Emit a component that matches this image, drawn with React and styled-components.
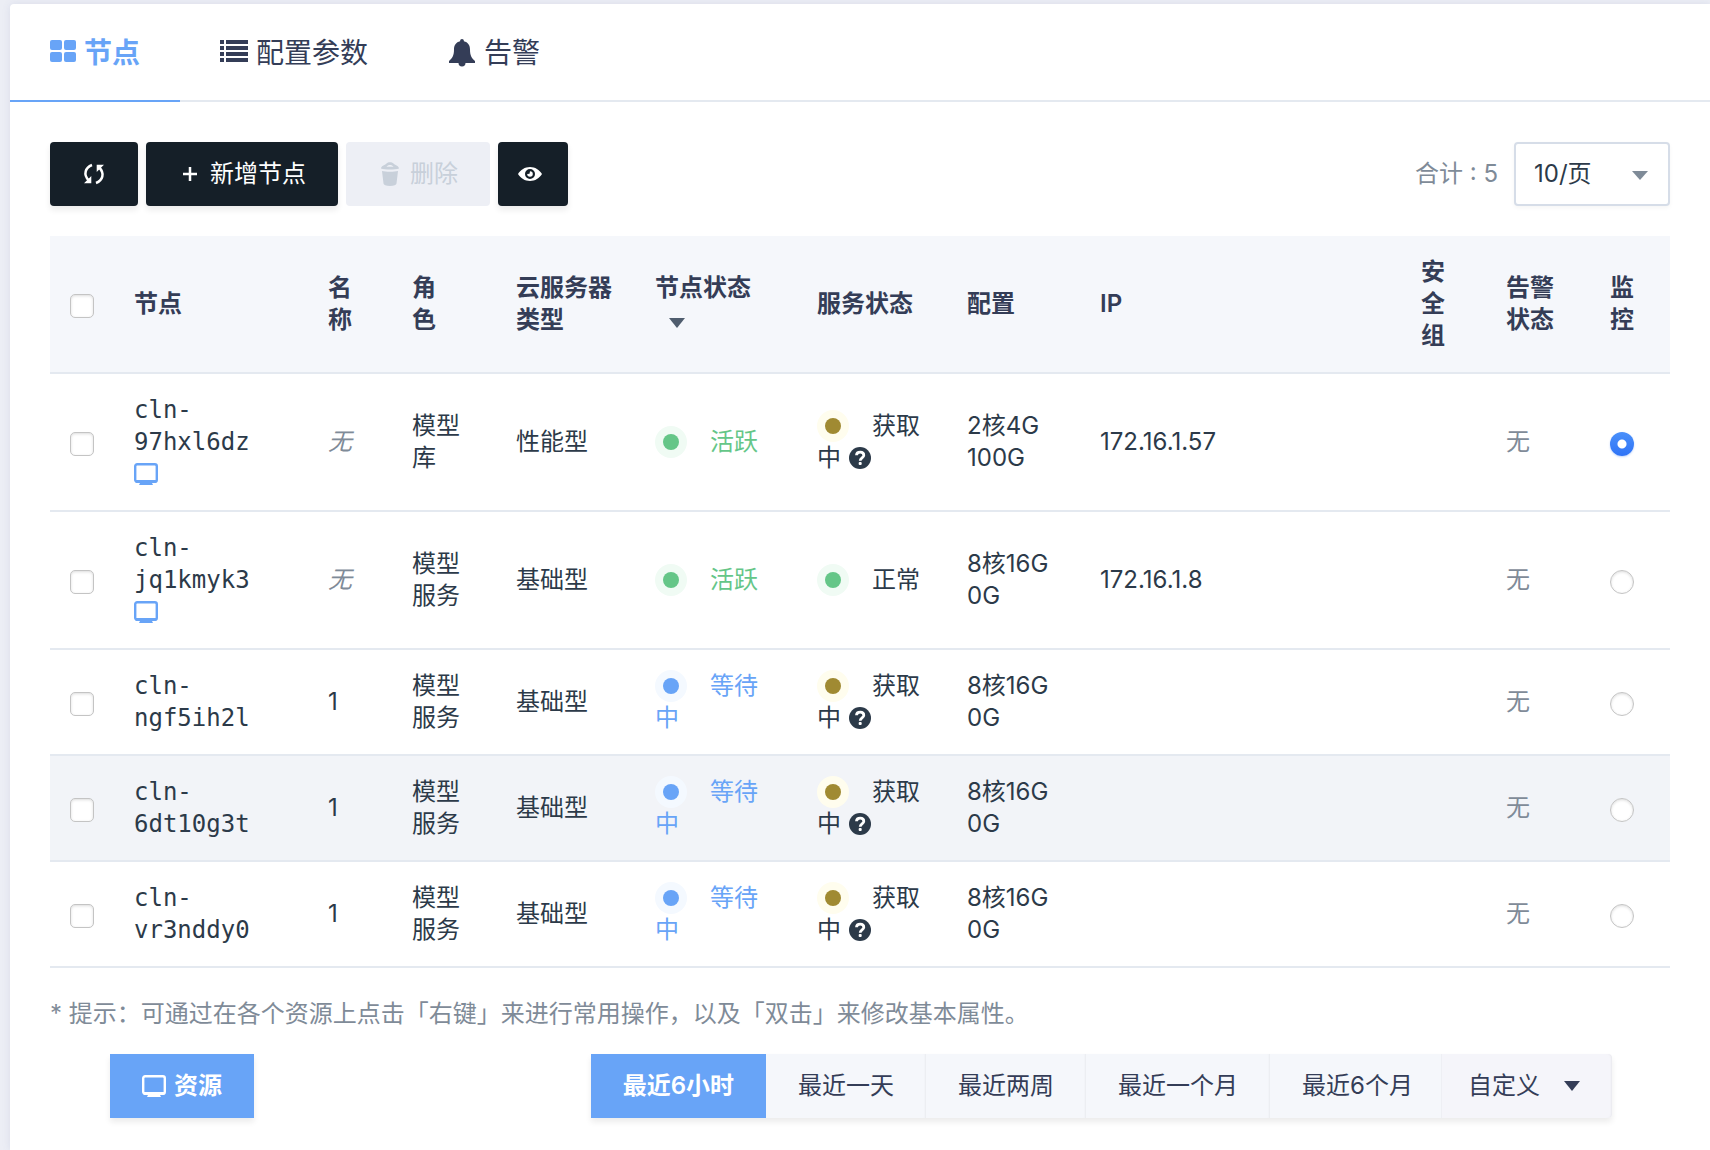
import React, { useState } from 'react'
import styled, { createGlobalStyle } from 'styled-components'

const colors = {
  page: '#eceef5',
  primary: '#68a4f7',
  heading: '#343d57',
  text: '#2c3a49',
  muted: '#7f8b98',
  line: '#e4e9f0',
  dark: '#151f28',
  soft: '#f5f7fb',
  success: '#65c688',
  pending: '#a08a32',
}

const halos = {
  success: '#f0fbf4',
  primary: '#f4f9ff',
  pending: '#fffdee',
}

const GlobalStyle = createGlobalStyle`
  * {
    box-sizing: border-box;
  }

  body {
    margin: 0;
    background: ${colors.page};
    color: ${colors.text};
    font: 24px/32px Inter, 'Noto Sans CJK SC', sans-serif;
  }

  button,
  select {
    font: inherit;
    color: inherit;
  }
`

const Card = styled.main`
  margin: 4px 0 0 10px;
  min-height: calc(100vh - 4px);
  background: #fff;
  border-radius: 4px 0 0 0;
  box-shadow: 0 0 8px rgba(90, 100, 160, 0.12);
`

const Tabs = styled.nav`
  display: flex;
  border-bottom: 2px solid ${colors.line};
`

const Tab = styled.a`
  display: flex;
  align-items: center;
  gap: 8px;
  height: 98px;
  margin-bottom: -2px;
  padding: 2px 40px 0;
  border-bottom: 2px solid ${props => (props.$active ? colors.primary : 'transparent')};
  color: ${props => (props.$active ? colors.primary : colors.heading)};
  font-size: 28px;
  font-weight: ${props => (props.$active ? 600 : 400)};
  text-decoration: none;
`

const Content = styled.section`
  padding: 40px 40px 32px;
`

const Toolbar = styled.div`
  display: flex;
  align-items: center;
  gap: 8px;
  margin-bottom: 30px;
`

const Button = styled.button`
  display: flex;
  align-items: center;
  gap: 8px;
  height: 64px;
  padding: ${props => (props.$compact ? '0 26px 0 20px' : '0 32px')};
  border: 0;
  border-radius: 4px;
  background: ${colors.dark};
  color: #fff;
  box-shadow: 0 4px 6px rgba(0, 0, 0, 0.08);

  &:disabled {
    background: #edeff5;
    color: #c8d0da;
    box-shadow: none;
  }
`

const Total = styled.span`
  margin: 0 8px 0 auto;
  color: ${colors.muted};
`

const SelectBox = styled.div`
  position: relative;
  color: ${colors.muted};

  svg {
    position: absolute;
    top: 29px;
    right: 22px;
    pointer-events: none;
  }
`

const Select = styled.select`
  appearance: none;
  display: block;
  width: 156px;
  height: 64px;
  padding: 0 18px;
  border: 2px solid #d6dde8;
  border-radius: 4px;
  background: #fff;
  color: ${colors.text};
  box-shadow: 0 2px 4px rgba(0, 0, 0, 0.04);
`

const Table = styled.table`
  width: 100%;
  table-layout: fixed;
  border-collapse: separate;
  border-spacing: 0;
`

const Col = styled.col`
  width: ${props => (props.$w ? `${props.$w}px` : 'auto')};
`

const Th = styled.th`
  padding: 20px;
  border-bottom: 2px solid ${colors.line};
  background: ${colors.soft};
  color: ${colors.heading};
  font-weight: 600;
  text-align: left;
  white-space: pre-line;
`

const Row = styled.tr`
  background: ${props => (props.$hovered ? '#f2f4f8' : '#fff')};
`

const Td = styled.td`
  padding: 20px;
  border-bottom: 2px solid ${colors.line};
  color: ${props => (props.$muted ? colors.muted : colors.text)};
`

const Check = styled.input`
  appearance: none;
  display: block;
  width: 24px;
  height: 24px;
  margin: 4px 0 0;
  border: 1px solid #c4c4c4;
  border-radius: ${props => (props.type === 'radio' ? '50%' : '5px')};
  background: #fff;
  box-shadow: inset 0 1px 3px rgba(0, 0, 0, 0.14);

  &:checked {
    border: 0;
    background: ${props =>
      props.type === 'radio'
        ? 'radial-gradient(circle, #fff 4px, transparent 5px), linear-gradient(#4a90fa, #2f73f6)'
        : colors.primary};
    box-shadow: 0 1px 2px rgba(47, 115, 246, 0.3);
  }
`

const NodeId = styled.span`
  display: block;
  font-family: 'DejaVu Sans Mono', monospace;
`

const Console = styled.a`
  display: flex;
  align-items: center;
  height: 32px;
  color: ${colors.primary};
`

const Dot = styled.i`
  display: inline-block;
  width: 16px;
  height: 16px;
  margin: 0 31px 0 8px;
  border-radius: 50%;
  background: ${props => colors[props.$tone]};
  box-shadow: 0 0 0 8px ${props => halos[props.$tone]};
`

const Status = styled.span`
  color: ${props => (props.$tone ? colors[props.$tone] : colors.text)};
`

const SortCaret = styled.span`
  display: inline-block;
  padding: 0 14px;
  color: #4f5d6e;
`

const HelpIcon = styled.svg`
  margin-left: 7px;
  vertical-align: -4px;
`

const Tip = styled.p`
  margin: 30px 0 24px;
  color: ${colors.muted};
`

const MonitorBar = styled.div`
  display: flex;
  justify-content: space-between;
  padding: 0 58px 0 60px;
`

const ResourceButton = styled(Button)`
  border-radius: 0;
  background: ${colors.primary};
  font-weight: 600;
`

const Ranges = styled.div`
  display: flex;
  border-radius: 0 4px 4px 0;
  box-shadow: 0 4px 6px rgba(0, 0, 0, 0.08);
`

const Range = styled.button`
  height: 64px;
  padding: 0 32px;
  border: 0;
  background: ${props => (props.$active ? colors.primary : colors.soft)};
  color: ${props => (props.$active ? '#fff' : colors.heading)};
  font-weight: ${props => (props.$active ? 600 : 400)};

  & + & {
    box-shadow: inset -2px 0 2px -1px rgba(0, 0, 0, 0.05);
  }
`

const CustomRange = styled(Range)`
  display: flex;
  align-items: center;
  gap: 24px;
  margin-left: -4px;
  padding: 0 32px 0 26px;
  border-left: 1px solid #eeeff4;
  border-radius: 0 4px 4px 0;
  background: #f5f5fa;
`

const Caret = ({ height = 10 }) => (
  <svg width="16" height={height} viewBox="0 0 16 10" preserveAspectRatio="none" fill="currentColor">
    <path d="M0 0h16L8 10z" />
  </svg>
)

const GridIcon = () => (
  <svg width="26" height="28" viewBox="0 0 26 28" fill="currentColor">
    <rect x="0" y="1" width="12" height="10" rx="2" />
    <rect x="14" y="1" width="12" height="10" rx="2" />
    <rect x="0" y="13" width="12" height="10" rx="2" />
    <rect x="14" y="13" width="12" height="10" rx="2" />
  </svg>
)

const ListIcon = () => (
  <svg width="28" height="28" viewBox="0 0 28 28" fill="currentColor">
    {[1, 7, 13, 19].map(y => (
      <path key={y} d={`M0 ${y}h4v4H0zM6 ${y}h22v4H6z`} />
    ))}
  </svg>
)

const BellIcon = () => (
  <svg width="28" height="28" viewBox="0 0 28 28" fill="currentColor">
    <path d="M14 0c1.100 0 1.900.8 1.900 1.900v.4C20 3.200 22 6.500 22 10.500c0 6.500 2 9 5 11.500v2H17.500a3.500 3.500 0 0 1-7 0H1v-2c3-2.500 5-5 5-11.500 0-4 2-7.300 6.100-8.200v-.4C12.100.8 12.900 0 14 0z" />
  </svg>
)

const RefreshIcon = () => (
  <svg width="24" height="24" viewBox="0 0 24 24" fill="none" stroke="currentColor" strokeWidth="2.500">
    <path d="M10 3C3.500 5.500 .8 12.500 6.800 18.500M14 21c6.500-2.500 9.200-9.500 3.200-15.500" />
    <path d="M2 21.200h7.300v-7.300zM22 2.800h-7.300v7.300z" fill="currentColor" stroke="none" />
  </svg>
)

const PlusIcon = () => (
  <svg width="24" height="24" viewBox="0 0 24 24" stroke="currentColor" strokeWidth="2.500">
    <path d="M5 12h14M12 5v14" />
  </svg>
)

const TrashIcon = () => (
  <svg width="24" height="24" viewBox="0 0 24 24" fill="currentColor">
    <path
      fillRule="evenodd"
      d="M3 6.500C3 4 6.500 3.500 8.500 1.500c1.500-1.600 5.500-1.600 7 0C17.500 3.500 21 4 21 6.500c-4 1.300-14 1.300-18 0zM8.500 4.800h7C14 2.500 10 2.500 8.500 4.800z"
    />
    <path d="M4 9c4 1 12 1 16 0l-1.500 12.500c-.2 1.600-2.500 2.500-6.500 2.500s-6.300-.9-6.500-2.500z" />
  </svg>
)

const EyeIcon = () => (
  <svg width="24" height="24" viewBox="0 0 24 24" fill="currentColor">
    <path
      fillRule="evenodd"
      d="M12 5c5 0 9.500 2.800 12 7-2.500 4.200-7 7-12 7S2.500 16.200 0 12C2.500 7.800 7 5 12 5zm0 2a5 5 0 1 0 0 10 5 5 0 0 0 0-10zm0 2.200a2.800 2.800 0 1 1-2.800 2.800l2.300-.3z"
    />
  </svg>
)

const MonitorIcon = () => (
  <svg width="24" height="24" viewBox="0 0 24 24">
    <rect x="1.200" y="2.200" width="21.600" height="17.600" rx="2" fill="none" stroke="currentColor" strokeWidth="2.400" />
    <path d="M1 18h22v1c0 1-1 2-2 2h-3l1 2H5l1-2H3c-1 0-2-1-2-2z" fill="currentColor" />
  </svg>
)

const Help = () => (
  <HelpIcon width="24" height="24" viewBox="0 0 24 24">
    <circle cx="12" cy="12" r="11" fill={colors.text} />
    <path d="M8.500 9.200c.2-4.200 7.300-4.200 7.300 0 0 2.800-3.600 2.700-3.600 5.600" fill="none" stroke="#fff" strokeWidth="2.800" />
    <rect x="10.700" y="16" width="3" height="3" rx="1" fill="#fff" />
  </HelpIcon>
)

const columns = [
  { label: '节点', width: 194 },
  { label: '名称', width: 84 },
  { label: '角\n色', width: 104 },
  { label: '云服务器类型', width: 139 },
  { label: '节点状态', width: 162, sorted: true },
  { label: '服务状态', width: 150 },
  { label: '配置', width: 133 },
  { label: 'IP' },
  { label: '安全组', width: 85 },
  { label: '告警状态', width: 104 },
  { label: '监控', width: 80 },
]

const waiting = { tone: 'primary', text: '等待中' }
const active = { tone: 'success', text: '活跃' }
const fetching = { tone: 'pending', text: '获取中', help: true }
const normal = { tone: 'success', text: '正常' }

const nodes = [
  { id: 'cln-97hxl6dz', console: true, role: '模型库', type: '性能型', status: active, service: fetching, config: '2核4G 100G', ip: '172.16.1.57' },
  { id: 'cln-jq1kmyk3', console: true, role: '模型服务', type: '基础型', status: active, service: normal, config: '8核16G 0G', ip: '172.16.1.8' },
  { id: 'cln-ngf5ih2l', name: '1', role: '模型服务', type: '基础型', status: waiting, service: fetching, config: '8核16G 0G' },
  { id: 'cln-6dt10g3t', name: '1', role: '模型服务', type: '基础型', status: waiting, service: fetching, config: '8核16G 0G', hovered: true },
  { id: 'cln-vr3nddy0', name: '1', role: '模型服务', type: '基础型', status: waiting, service: fetching, config: '8核16G 0G' },
]

const ranges = ['最近6小时', '最近一天', '最近两周', '最近一个月', '最近6个月']

const NodeRow = ({ node, monitored, onMonitor }) => (
  <Row $hovered={node.hovered}>
    <Td>
      <Check type="checkbox" aria-label={node.id} />
    </Td>
    <Td>
      <NodeId>{node.id}</NodeId>
      {node.console && (
        <Console href="#console" aria-label="控制台">
          <MonitorIcon />
        </Console>
      )}
    </Td>
    <Td $muted={!node.name}>{node.name || <em>无</em>}</Td>
    <Td>{node.role}</Td>
    <Td>{node.type}</Td>
    <Td>
      <Dot $tone={node.status.tone} />
      <Status $tone={node.status.tone}>{node.status.text}</Status>
    </Td>
    <Td>
      <Dot $tone={node.service.tone} />
      <Status>{node.service.text}</Status>
      {node.service.help && <Help />}
    </Td>
    <Td>{node.config}</Td>
    <Td>{node.ip}</Td>
    <Td />
    <Td $muted>无</Td>
    <Td>
      <Check type="radio" name="monitor" aria-label={`监控 ${node.id}`} checked={monitored} onChange={onMonitor} />
    </Td>
  </Row>
)

const App = () => {
  const [monitor, setMonitor] = useState(nodes[0].id)
  const [range, setRange] = useState(ranges[0])

  return (
    <>
      <GlobalStyle />
      <Card>
        <Tabs>
          <Tab href="#nodes" $active>
            <GridIcon />
            节点
          </Tab>
          <Tab href="#params">
            <ListIcon />
            配置参数
          </Tab>
          <Tab href="#alarms">
            <BellIcon />
            告警
          </Tab>
        </Tabs>
        <Content>
          <Toolbar>
            <Button aria-label="刷新">
              <RefreshIcon />
            </Button>
            <Button>
              <PlusIcon />
              新增节点
            </Button>
            <Button disabled>
              <TrashIcon />
              删除
            </Button>
            <Button $compact aria-label="显示列">
              <EyeIcon />
            </Button>
            <Total>合计 : 5</Total>
            <SelectBox>
              <Select aria-label="每页条数" defaultValue="10">
                <option value="10">10/页</option>
                <option value="20">20/页</option>
                <option value="50">50/页</option>
              </Select>
              <Caret height={9} />
            </SelectBox>
          </Toolbar>
          <Table>
            <colgroup>
              <Col $w={64} />
              {columns.map(col => (
                <Col key={col.label} $w={col.width} />
              ))}
            </colgroup>
            <thead>
              <tr>
                <Th>
                  <Check type="checkbox" aria-label="全选" />
                </Th>
                {columns.map(col => (
                  <Th key={col.label}>
                    {col.label}
                    {col.sorted && (
                      <SortCaret>
                        <Caret />
                      </SortCaret>
                    )}
                  </Th>
                ))}
              </tr>
            </thead>
            <tbody>
              {nodes.map(node => (
                <NodeRow
                  key={node.id}
                  node={node}
                  monitored={monitor === node.id}
                  onMonitor={() => setMonitor(node.id)}
                />
              ))}
            </tbody>
          </Table>
          <Tip>* 提示：可通过在各个资源上点击「右键」来进行常用操作，以及「双击」来修改基本属性。</Tip>
          <MonitorBar>
            <ResourceButton>
              <MonitorIcon />
              资源
            </ResourceButton>
            <Ranges>
              {ranges.map(label => (
                <Range key={label} $active={label === range} onClick={() => setRange(label)}>
                  {label}
                </Range>
              ))}
              <CustomRange>
                自定义
                <Caret />
              </CustomRange>
            </Ranges>
          </MonitorBar>
        </Content>
      </Card>
    </>
  )
}

export default App
